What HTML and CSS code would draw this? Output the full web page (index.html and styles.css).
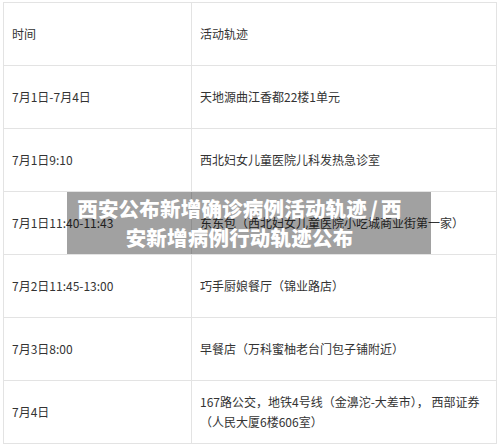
FILE: index.html
```html
<!DOCTYPE html>
<html lang="zh">
<head>
<meta charset="utf-8">
<link rel="stylesheet" href="styles.css">
</head>
<body>
<div class="page">
  <table class="trace">
    <tr><td class="time">时间</td><td class="place">活动轨迹</td></tr>
    <tr><td class="time">7月1日-7月4日</td><td class="place">天地源曲江香都22楼1单元</td></tr>
    <tr><td class="time">7月1日9:10</td><td class="place">西北妇女儿童医院儿科发热急诊室</td></tr>
    <tr><td class="time">7月1日11:40-11:43</td><td class="place">东东包（西北妇女儿童医院小吃城商业街第一家）</td></tr>
    <tr><td class="time">7月2日11:45-13:00</td><td class="place">巧手厨娘餐厅（锦业路店）</td></tr>
    <tr><td class="time">7月3日8:00</td><td class="place">早餐店（万科蜜柚老台门包子铺附近）</td></tr>
    <tr><td class="time">7月4日</td><td class="place">167路公交，地铁4号线（金濞沱-大差市）， 西部证券（人民大厦6楼606室）</td></tr>
  </table>
  <div class="caption">西安公布新增确诊病例活动轨迹<span class="slash">/</span>西<br>安新增病例行动轨迹公布</div>
</div>
</body>
</html>
```
FILE: styles.css
```css
html, body {
  margin: 0;
  padding: 0;
  background: #ffffff;
}
.page {
  position: relative;
  width: 500px;
  height: 448px;
  overflow: hidden;
  padding: 2px 0 0 3px;
  box-sizing: border-box;
  font-family: "Noto Sans CJK SC", "Noto Sans", sans-serif;
}
.trace {
  border-collapse: collapse;
  width: 494px;
  table-layout: fixed;
}
.trace td {
  border: 1px solid #e3e3e3;
  height: 63px;
  padding: 0 8px;
  font-size: 12px;
  line-height: 20px;
  color: #333333;
  vertical-align: middle;
  box-sizing: border-box;
}
.trace .time {
  width: 188px;
}
.caption {
  position: absolute;
  left: 67px;
  top: 192px;
  width: 364px;
  height: 62px;
  padding: 2px 29px 0 10px;
  box-sizing: border-box;
  background: rgba(0, 0, 0, 0.37);
  color: #ffffff;
  font-size: 20.5px;
  font-weight: 900;
  line-height: 29px;
  letter-spacing: 0.2px;
  text-align: center;
  white-space: nowrap;
}
.slash {
  margin: 0 3px;
}
```
